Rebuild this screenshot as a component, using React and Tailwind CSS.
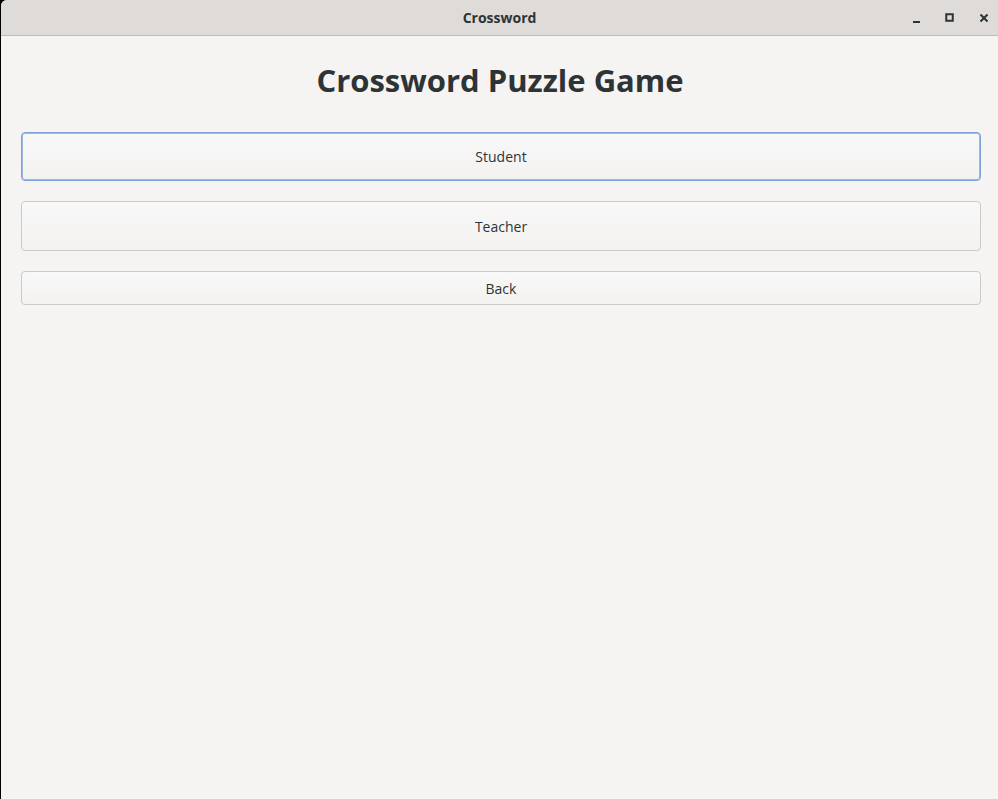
export default function App() {
  return (
    <div className="w-[998px] h-[799px] bg-black overflow-hidden">
      <div className="w-full h-full ml-[1px] rounded-tl-[6px] bg-[#f5f4f2] flex flex-col overflow-hidden">
        <div className="h-[36px] shrink-0 bg-[#dedbd8] border-b border-[#bfbbb7] flex items-center relative">
          <div className="flex-1 text-center text-[14px] font-bold text-[#2e3436] pr-[1px]" style={{ fontFamily: '"Open Sans", "Noto Sans", sans-serif' }}>
            Crossword
          </div>
          <div className="absolute right-0 top-0 h-[35px] flex items-center">
            <svg width="10" height="10" viewBox="0 0 10 10" className="mr-[23px] mt-[2px]">
              <rect x="1" y="7" width="7" height="2" fill="#2e3436" />
            </svg>
            <svg width="10" height="10" viewBox="0 0 10 10" className="mr-[24px]">
              <rect x="1.25" y="1.25" width="6.5" height="6.5" fill="none" stroke="#2e3436" strokeWidth="2" />
            </svg>
            <svg width="10" height="10" viewBox="0 0 10 10" className="mr-[10px]">
              <path d="M1.5 1.5 L8.5 8.5 M8.5 1.5 L1.5 8.5" stroke="#2e3436" strokeWidth="2" />
            </svg>
          </div>
        </div>
        <div className="flex flex-col px-[20px]" style={{ fontFamily: '"Open Sans", "Noto Sans", sans-serif' }}>
          <h1 className="text-center text-[31px] font-bold text-[#2e3436] mt-[22px] h-[44px] leading-[44px]">
            Crossword Puzzle Game
          </h1>
          <button className="mt-[30px] h-[49px] w-[960px] rounded-[4px] border border-[#7fa3d8] bg-gradient-to-b from-[#f9f8f8] to-[#f3f2f1] text-[14px] text-[#2e3436] shadow-[inset_0_0_0_1px_#9db7e0]">
            Student
          </button>
          <button className="mt-[20px] h-[50px] w-[960px] rounded-[4px] border border-[#cdc9c5] bg-gradient-to-b from-[#f9f8f8] to-[#f3f2f1] text-[14px] text-[#2e3436]">
            Teacher
          </button>
          <button className="mt-[20px] h-[34px] w-[960px] rounded-[4px] border border-[#cdc9c5] bg-gradient-to-b from-[#f9f8f8] to-[#f3f2f1] text-[14px] text-[#2e3436]">
            Back
          </button>
        </div>
      </div>
    </div>
  );
}
